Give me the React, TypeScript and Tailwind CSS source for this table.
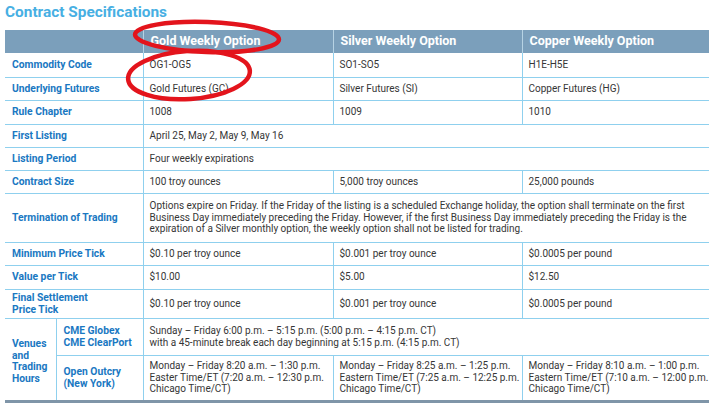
import React from "react";

const L = "border-b border-[#8fd0ee] align-middle";
const V = "border-l border-[#8fd0ee]";
const lab = "pl-[7px] font-bold text-[#1a78c2] leading-[11.5px] text-[10.3px]";
const cell = "pl-[6px] text-[#363636] leading-[11.5px]";
const BB = "border-b-[3px] border-b-[#7f95a8]";

export default function App() {
  return (
    <div
      className="relative w-[716px] h-[412px] bg-white overflow-hidden"
      style={{ fontFamily: "Roboto, 'Liberation Sans', sans-serif" }}
    >
      <div className="pl-[5px] pt-[3px] h-[30px] text-[15.4px] font-bold text-[#47afe3] leading-[18px]">
        Contract Specifications
      </div>
      <table className="ml-[5px] w-[704px] table-fixed border-collapse text-[10px]">
        <colgroup>
          <col className="w-[51px]" />
          <col className="w-[87px]" />
          <col className="w-[190px]" />
          <col className="w-[189px]" />
          <col className="w-[187px]" />
        </colgroup>
        <tbody>
          <tr className="h-[23px] bg-[#7b9fbb] text-white font-bold text-[12.5px]">
            <td colSpan={2}></td>
            <td className="pl-[7px] border-l border-[#b7d3e4]">Gold Weekly Option</td>
            <td className="pl-[7px] border-l border-[#b7d3e4]">Silver Weekly Option</td>
            <td className="pl-[7px] border-l border-[#b7d3e4]">Copper Weekly Option</td>
          </tr>
          <tr className="h-[24px]">
            <td colSpan={2} className={`${L} ${lab}`}>Commodity Code</td>
            <td className={`${L} ${V} ${cell}`}>OG1-OG5</td>
            <td className={`${L} ${V} ${cell}`}>SO1-SO5</td>
            <td className={`${L} ${V} ${cell}`}>H1E-H5E</td>
          </tr>
          <tr className="h-[23px]">
            <td colSpan={2} className={`${L} ${lab}`}>Underlying Futures</td>
            <td className={`${L} ${V} ${cell}`}>Gold Futures (GC)</td>
            <td className={`${L} ${V} ${cell}`}>Silver Futures (SI)</td>
            <td className={`${L} ${V} ${cell}`}>Copper Futures (HG)</td>
          </tr>
          <tr className="h-[24px]">
            <td colSpan={2} className={`${L} ${lab}`}>Rule Chapter</td>
            <td className={`${L} ${V} ${cell}`}>1008</td>
            <td className={`${L} ${V} ${cell}`}>1009</td>
            <td className={`${L} ${V} ${cell}`}>1010</td>
          </tr>
          <tr className="h-[23px]">
            <td colSpan={2} className={`${L} ${lab}`}>First Listing</td>
            <td colSpan={3} className={`${L} ${V} ${cell}`}>April 25, May 2, May 9, May 16</td>
          </tr>
          <tr className="h-[23px]">
            <td colSpan={2} className={`${L} ${lab}`}>Listing Period</td>
            <td colSpan={3} className={`${L} ${V} ${cell}`}>Four weekly expirations</td>
          </tr>
          <tr className="h-[23px]">
            <td colSpan={2} className={`${L} ${lab}`}>Contract Size</td>
            <td className={`${L} ${V} ${cell}`}>100 troy ounces</td>
            <td className={`${L} ${V} ${cell}`}>5,000 troy ounces</td>
            <td className={`${L} ${V} ${cell}`}>25,000 pounds</td>
          </tr>
          <tr className="h-[49px]">
            <td colSpan={2} className={`${L} ${lab}`}>Termination of Trading</td>
            <td colSpan={3} className={`${L} ${V} ${cell} whitespace-nowrap`}>
              Options expire on Friday. If the Friday of the listing is a scheduled Exchange holiday, the option shall terminate on the first
              <br />
              Business Day immediately preceding the Friday. However, if the first Business Day immediately preceding the Friday is the
              <br />
              expiration of a Silver monthly option, the weekly option shall not be listed for trading.
            </td>
          </tr>
          <tr className="h-[23px]">
            <td colSpan={2} className={`${L} ${lab}`}>Minimum Price Tick</td>
            <td className={`${L} ${V} ${cell}`}>$0.10 per troy ounce</td>
            <td className={`${L} ${V} ${cell}`}>$0.001 per troy ounce</td>
            <td className={`${L} ${V} ${cell}`}>$0.0005 per pound</td>
          </tr>
          <tr className="h-[24px]">
            <td colSpan={2} className={`${L} ${lab}`}>Value per Tick</td>
            <td className={`${L} ${V} ${cell}`}>$10.00</td>
            <td className={`${L} ${V} ${cell}`}>$5.00</td>
            <td className={`${L} ${V} ${cell}`}>$12.50</td>
          </tr>
          <tr className="h-[29px]">
            <td colSpan={2} className={`${L} ${lab}`}>
              Final Settlement
              <br />
              Price Tick
            </td>
            <td className={`${L} ${V} ${cell}`}>$0.10 per troy ounce</td>
            <td className={`${L} ${V} ${cell}`}>$0.001 per troy ounce</td>
            <td className={`${L} ${V} ${cell}`}>$0.0005 per pound</td>
          </tr>
          <tr className="h-[37px]">
            <td rowSpan={2} className={`${BB} ${lab} pt-[4px]`}>
              Venues
              <br />
              and
              <br />
              Trading
              <br />
              Hours
            </td>
            <td className={`${L} ${V} ${lab}`}>
              CME Globex
              <br />
              CME ClearPort
            </td>
            <td colSpan={3} className={`${L} ${V} ${cell}`}>
              Sunday – Friday 6:00 p.m. – 5:15 p.m. (5:00 p.m. – 4:15 p.m. CT)
              <br />
              with a 45-minute break each day beginning at 5:15 p.m. (4:15 p.m. CT)
            </td>
          </tr>
          <tr className="h-[46px]">
            <td className={`${BB} ${V} ${lab}`}>
              Open Outcry
              <br />
              (New York)
            </td>
            <td className={`${BB} ${V} ${cell}`}>
              Monday – Friday 8:20 a.m. – 1:30 p.m.
              <br />
              Easter Time/ET (7:20 a.m. – 12:30 p.m.
              <br />
              Chicago Time/CT)
            </td>
            <td className={`${BB} ${V} ${cell}`}>
              Monday – Friday 8:25 a.m. – 1:25 p.m.
              <br />
              Eastern Time/ET (7:25 a.m. – 12:25 p.m.
              <br />
              Chicago Time/CT)
            </td>
            <td className={`${BB} ${V} ${cell}`}>
              Monday – Friday 8:10 a.m. – 1:00 p.m.
              <br />
              Eastern Time/ET (7:10 a.m. – 12:00 p.m.
              <br />
              Chicago Time/CT)
            </td>
          </tr>
        </tbody>
      </table>
      <svg className="absolute left-0 top-0 pointer-events-none" width="716" height="412">
        <ellipse cx="207" cy="37" rx="72" ry="15" fill="none" stroke="#e3141c" strokeWidth="4.5" transform="rotate(2 207 37)" />
        <ellipse cx="189" cy="75" rx="61" ry="24" fill="none" stroke="#e3141c" strokeWidth="4.5" transform="rotate(-4 189 75)" />
      </svg>
    </div>
  );
}
